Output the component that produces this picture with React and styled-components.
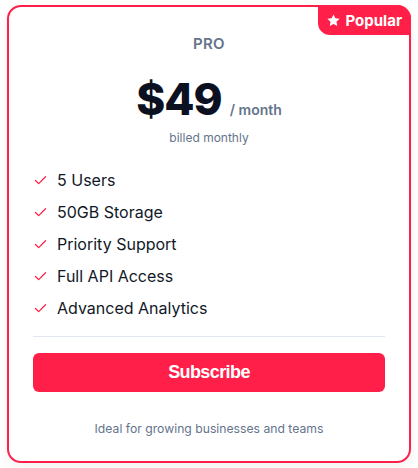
import { createGlobalStyle } from "styled-components";
import styled from "styled-components";
import { Check } from "lucide-react";

const GlobalStyle = createGlobalStyle`
  * { box-sizing: border-box; }
  body {
    margin: 0;
    background: #fff;
    font-family: Inter, "Noto Sans", sans-serif;
  }
`

const Page = styled.div`
  padding: 5px 7px 5px 7px;
  width: 418px;
`
const Card = styled.div`
  position: relative;
  width: 404px;
  height: 458px;
  border: 2px solid #ff1f48;
  border-radius: 14px;
  background: #fff;
  padding: 26px 24px 0;
  display: flex;
  flex-direction: column;
  align-items: stretch;
  box-shadow: 0 4px 14px rgba(15, 23, 42, 0.06);
`
const Badge = styled.div`
  position: absolute;
  top: -2px;
  right: -2px;
  height: 30px;
  padding: 0 9px 0 8px;
  display: flex;
  align-items: center;
  gap: 5px;
  background: #ff1f48;
  color: #fff;
  font-weight: 700;
  font-size: 15px;
  border-radius: 0 14px 0 12px;
`
const Plan = styled.div`
  text-align: center;
  font-size: 15px;
  font-weight: 600;
  color: #64748b;
  line-height: 22px;
  letter-spacing: 0.3px;
`
const PriceRow = styled.div`
  display: flex;
  justify-content: center;
  align-items: baseline;
  gap: 8px;
  margin-top: 18px;
`
const Amount = styled.span`
  font-size: 44px;
  font-weight: 800;
  color: #0b1120;
  line-height: 52px;
  letter-spacing: -1px;
`
const Period = styled.span`
  font-size: 14px;
  font-weight: 600;
  color: #64748b;
`
const Billed = styled.div`
  text-align: center;
  font-size: 12px;
  color: #64748b;
  line-height: 16px;
  margin-top: 5px;
`
const Features = styled.ul`
  list-style: none;
  margin: 22px 0 0;
  padding: 0;
  display: flex;
  flex-direction: column;
  gap: 8px;
`
const Feature = styled.li`
  display: flex;
  align-items: center;
  gap: 9px;
  font-size: 16px;
  line-height: 24px;
  color: #111827;
`
const Divider = styled.hr`
  border: none;
  border-top: 1px solid #e2e8f0;
  margin: 16px 0 0;
`
const Button = styled.button`
  margin-top: 16px;
  height: 39px;
  border: none;
  border-radius: 6px;
  background: #ff1f48;
  color: #fff;
  font-family: "Liberation Sans", Arial, sans-serif;
  font-weight: 700;
  font-size: 18px;
  letter-spacing: -0.6px;
  cursor: pointer;
`
const Note = styled.div`
  margin-top: 29px;
  text-align: center;
  font-size: 12.2px;
  color: #64748b;
`

const Star = () => (
  <svg width="15" height="15" viewBox="0 0 24 24" fill="#fff">
    <path d="M12 2.2l2.95 6.2 6.8.85-5 4.7 1.3 6.75L12 17.4l-6.05 3.3 1.3-6.75-5-4.7 6.8-.85z" />
  </svg>
)

const features = ["5 Users", "50GB Storage", "Priority Support", "Full API Access", "Advanced Analytics"];

export default function App() {
  return (
    <Page>
      <GlobalStyle />
      <Card>
        <Badge>
          <Star />
          Popular
        </Badge>
        <Plan>PRO</Plan>
        <PriceRow>
          <Amount>$49</Amount>
          <Period>/ month</Period>
        </PriceRow>
        <Billed>billed monthly</Billed>
        <Features>
          {features.map((f) => (
            <Feature key={f}>
              <Check size={15} color="#ff1f48" strokeWidth={2} />
              {f}
            </Feature>
          ))}
        </Features>
        <Divider />
        <Button>Subscribe</Button>
        <Note>Ideal for growing businesses and teams</Note>
      </Card>
    </Page>
  );
}
